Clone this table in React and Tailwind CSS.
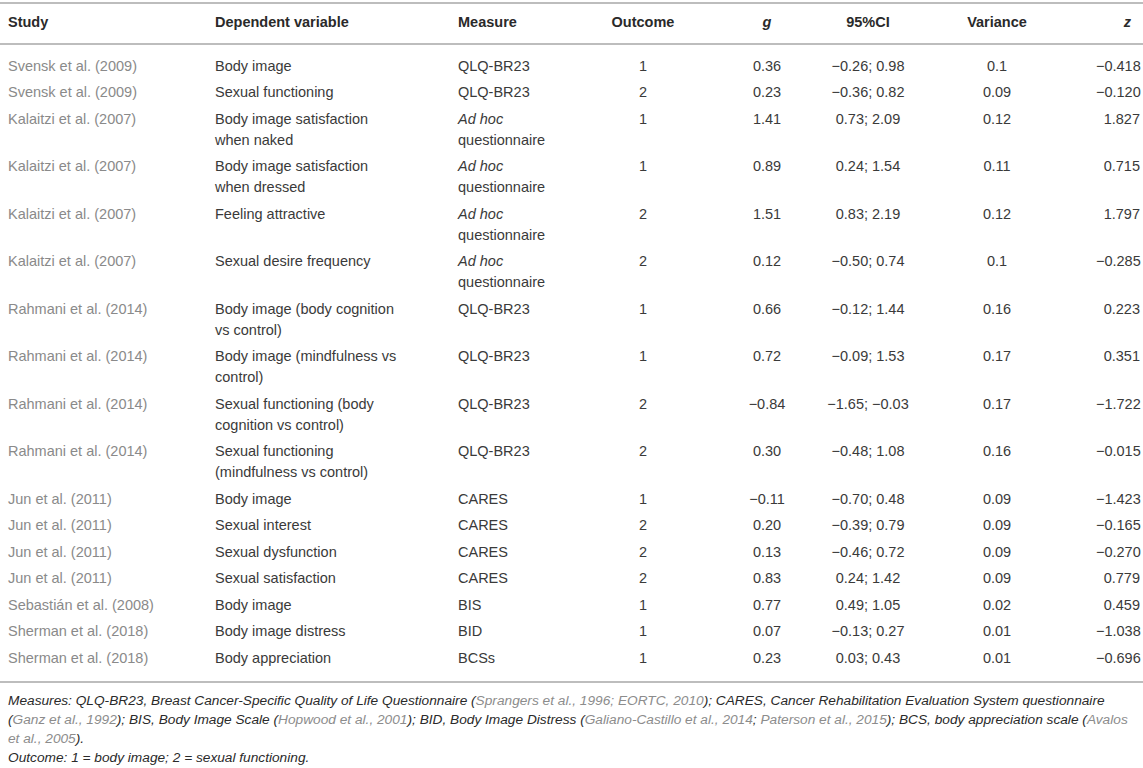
import React from 'react'

const rows = [
    { study: 'Svensk et al. (2009)', dep: ['Body image'], measure: 'QLQ-BR23', outcome: '1', g: '0.36', ci: '−0.26; 0.98', v: '0.1', z: '−0.418' },
    { study: 'Svensk et al. (2009)', dep: ['Sexual functioning'], measure: 'QLQ-BR23', outcome: '2', g: '0.23', ci: '−0.36; 0.82', v: '0.09', z: '−0.120' },
    { study: 'Kalaitzi et al. (2007)', dep: ['Body image satisfaction', 'when naked'], adhoc: true, outcome: '1', g: '1.41', ci: '0.73; 2.09', v: '0.12', z: '1.827' },
    { study: 'Kalaitzi et al. (2007)', dep: ['Body image satisfaction', 'when dressed'], adhoc: true, outcome: '1', g: '0.89', ci: '0.24; 1.54', v: '0.11', z: '0.715' },
    { study: 'Kalaitzi et al. (2007)', dep: ['Feeling attractive'], adhoc: true, outcome: '2', g: '1.51', ci: '0.83; 2.19', v: '0.12', z: '1.797' },
    { study: 'Kalaitzi et al. (2007)', dep: ['Sexual desire frequency'], adhoc: true, outcome: '2', g: '0.12', ci: '−0.50; 0.74', v: '0.1', z: '−0.285' },
    { study: 'Rahmani et al. (2014)', dep: ['Body image (body cognition', 'vs control)'], measure: 'QLQ-BR23', outcome: '1', g: '0.66', ci: '−0.12; 1.44', v: '0.16', z: '0.223' },
    { study: 'Rahmani et al. (2014)', dep: ['Body image (mindfulness vs', 'control)'], measure: 'QLQ-BR23', outcome: '1', g: '0.72', ci: '−0.09; 1.53', v: '0.17', z: '0.351' },
    { study: 'Rahmani et al. (2014)', dep: ['Sexual functioning (body', 'cognition vs control)'], measure: 'QLQ-BR23', outcome: '2', g: '−0.84', ci: '−1.65; −0.03', v: '0.17', z: '−1.722' },
    { study: 'Rahmani et al. (2014)', dep: ['Sexual functioning', '(mindfulness vs control)'], measure: 'QLQ-BR23', outcome: '2', g: '0.30', ci: '−0.48; 1.08', v: '0.16', z: '−0.015' },
    { study: 'Jun et al. (2011)', dep: ['Body image'], measure: 'CARES', outcome: '1', g: '−0.11', ci: '−0.70; 0.48', v: '0.09', z: '−1.423' },
    { study: 'Jun et al. (2011)', dep: ['Sexual interest'], measure: 'CARES', outcome: '2', g: '0.20', ci: '−0.39; 0.79', v: '0.09', z: '−0.165' },
    { study: 'Jun et al. (2011)', dep: ['Sexual dysfunction'], measure: 'CARES', outcome: '2', g: '0.13', ci: '−0.46; 0.72', v: '0.09', z: '−0.270' },
    { study: 'Jun et al. (2011)', dep: ['Sexual satisfaction'], measure: 'CARES', outcome: '2', g: '0.83', ci: '0.24; 1.42', v: '0.09', z: '0.779' },
    { study: 'Sebastián et al. (2008)', dep: ['Body image'], measure: 'BIS', outcome: '1', g: '0.77', ci: '0.49; 1.05', v: '0.02', z: '0.459' },
    { study: 'Sherman et al. (2018)', dep: ['Body image distress'], measure: 'BID', outcome: '1', g: '0.07', ci: '−0.13; 0.27', v: '0.01', z: '−1.038' },
    { study: 'Sherman et al. (2018)', dep: ['Body appreciation'], measure: 'BCSs', outcome: '1', g: '0.23', ci: '0.03; 0.43', v: '0.01', z: '−0.696' },
]

// column widths: study | dependent | measure | outcome | g | ci | variance | z
const grid = 'grid grid-cols-[207px_243px_140px_106px_142px_60px_198px_1fr]'

const Cite = ({ children }) => <span className="text-[#8c8c8c]">{children}</span>

export default function App() {
    return (
        <div className="w-[1143px] h-[768px] bg-white overflow-hidden font-['Liberation_Sans',Arial,sans-serif] text-[14.5px] leading-[21px] text-[#3a3a3a]">
            <div className="mt-[2px] border-t-2 border-b-2 border-[#bdbdbd]">
                {/* Header */}
                <div className={`${grid} pt-[8px] pb-[10px] font-bold text-[#2a2a2a] border-b-2 border-[#bdbdbd]`}>
                    <div className="pl-[8px]">Study</div>
                    <div className="pl-[8px]">Dependent variable</div>
                    <div className="pl-[8px]">Measure</div>
                    <div className="flex justify-center whitespace-nowrap">Outcome</div>
                    <div className="flex justify-center italic">g</div>
                    <div className="flex justify-center whitespace-nowrap">95%CI</div>
                    <div className="flex justify-center">Variance</div>
                    <div className="flex justify-end pr-[12px] italic">z</div>
                </div>

                {/* Body */}
                <div className="pt-[8px] pb-[9px]">
                    {rows.map((r, i) => (
                        <div key={i} className={`${grid} py-[2.75px]`}>
                            <div className="pl-[8px] text-[#8a8a8a] whitespace-nowrap">{r.study}</div>
                            <div className="pl-[8px]">
                                {r.dep.map((line, j) => (
                                    <div key={j} className="whitespace-nowrap">{line}</div>
                                ))}
                            </div>
                            <div className="pl-[8px] whitespace-nowrap">
                                {r.adhoc ? (
                                    <>
                                        <div className="italic">Ad hoc</div>
                                        <div>questionnaire</div>
                                    </>
                                ) : r.measure}
                            </div>
                            <div className="flex justify-center">{r.outcome}</div>
                            <div className="flex justify-center whitespace-nowrap">{r.g}</div>
                            <div className="flex justify-center whitespace-nowrap">{r.ci}</div>
                            <div className="flex justify-center">{r.v}</div>
                            <div className="flex justify-end pr-[3px] whitespace-nowrap">{r.z}</div>
                        </div>
                    ))}
                </div>
            </div>

            {/* Footnote */}
            <div className="pt-[8px] pl-[8px] italic text-[13.7px] leading-[19px] text-[#2a2a2a]">
                <div className="whitespace-nowrap">
                    Measures: QLQ-BR23, Breast Cancer-Specific Quality of Life Questionnaire (<Cite>Sprangers et al., 1996; EORTC, 2010</Cite>); CARES, Cancer Rehabilitation Evaluation System questionnaire
                </div>
                <div className="whitespace-nowrap">
                    (<Cite>Ganz et al., 1992</Cite>); BIS, Body Image Scale (<Cite>Hopwood et al., 2001</Cite>); BID, Body Image Distress (<Cite>Galiano-Castillo et al., 2014</Cite>; <Cite>Paterson et al., 2015</Cite>); BCS, body appreciation scale (<Cite>Avalos</Cite>
                </div>
                <div className="whitespace-nowrap">
                    <Cite>et al., 2005</Cite>).
                </div>
                <div className="whitespace-nowrap">Outcome: 1 = body image; 2 = sexual functioning.</div>
            </div>
        </div>
    )
}
